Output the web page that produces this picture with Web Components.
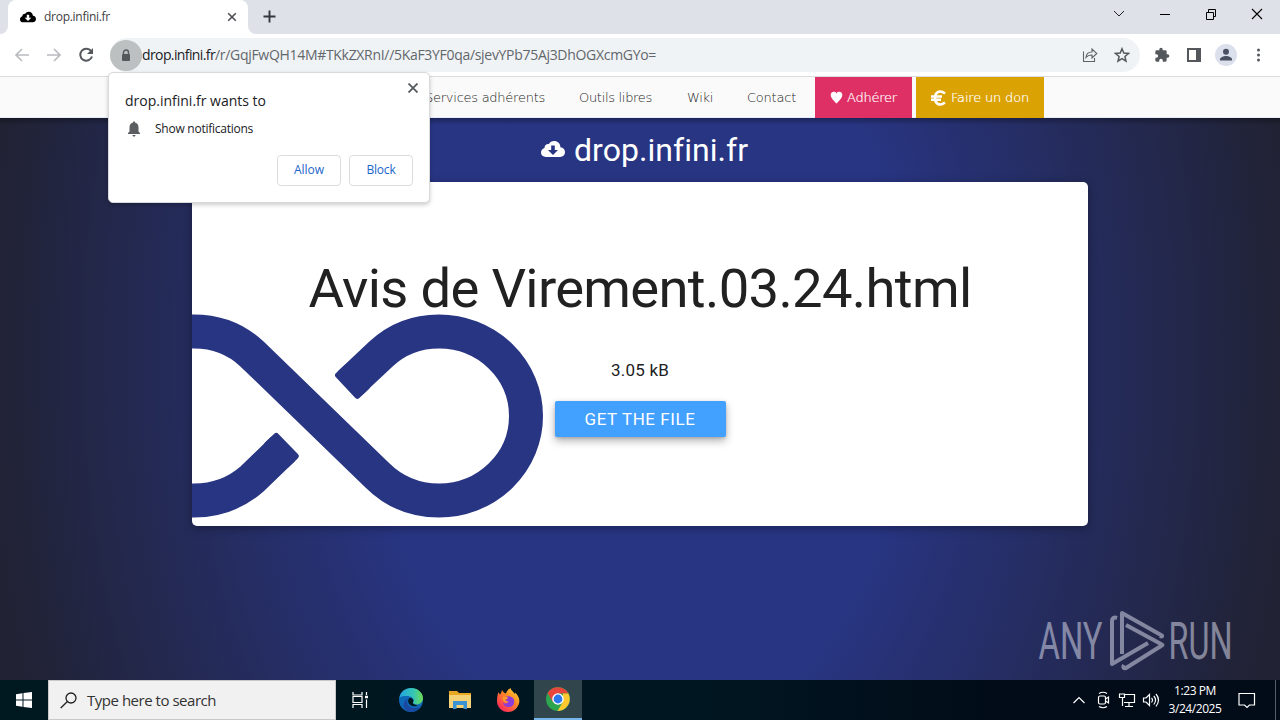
<!DOCTYPE html>
<html lang="en"><head><meta charset="utf-8"><title>drop.infini.fr</title>
<style>
html,body{margin:0;width:1280px;height:720px;overflow:hidden}
body{font-family:"Open Sans","Noto Sans",sans-serif}
</style></head><body>
<desktop-screen></desktop-screen>
<script>
const define=(name,css,html)=>customElements.define(name,class extends HTMLElement{
  constructor(){super();this.attachShadow({mode:'open'}).innerHTML='<style>*{box-sizing:border-box}svg{display:block;flex:none}'+css+'</style>'+html}
});
/* Label that spreads its letters over the width given in the w attribute. */
customElements.define('fit-text',class extends HTMLElement{
  constructor(){super();this.attachShadow({mode:'open'}).innerHTML='<style>:host{display:block;white-space:pre;flex:none}span{display:inline-block}</style><span><slot></slot></span>'}
  connectedCallback(){
    const w=+this.getAttribute('w'),s=this.shadowRoot.querySelector('span');
    this.style.width=w+'px';
    const n=s.getBoundingClientRect().width;
    if(n)s.style.letterSpacing=((w-n)/this.textContent.length)+'px';
  }
});
const cloud='<path fill="currentColor" d="M19.4 7.2C19.4 3.5 16.6 1 13.2 1c-2.400 0-4.300 1.100-5.300 3C5.200 3.600 3.400 5.600 3.500 8 1.300 8.700 0 10.400 0 12.600 0 15.500 2.200 17 5 17h14c3.200 0 5-2.100 5-4.900 0-2.500-1.800-4.600-4.600-4.900zM12 15l-5-5h3.200V5.500h3.600V10H17z"/>';

define('browser-tabs',`:host{display:flex;height:34px;background:#dee1e8;align-items:stretch;color:#45484c}
.left{width:8px;background:#fff}.left i{display:block;height:34px;background:#dee1e8;border-radius:0 0 8px 0}
.tab{width:240px;background:#fff;border-radius:8px 8px 0 0;display:flex;align-items:center;padding:0 11px 0 12px;font-size:12px;color:#3c4043}
.tab fit-text{margin:-2px auto 0 8px}.right{width:32px;background:linear-gradient(90deg,#fff 10px,#dee1e8 10px)}.right i{display:flex;height:34px;background:#dee1e8;border-radius:0 0 0 8px;padding:10px 0 0 15px}
.win{margin-left:auto;display:flex;align-items:center;padding:0 17px 6px 0;gap:34px}.c{color:#000}`,
`<div class="left"><i></i></div><div class="tab"><svg class="c" width="16" height="12" viewBox="0 0 24 18">${cloud}</svg><fit-text w="66">drop.infini.fr</fit-text><svg width="10" height="10" viewBox="0 0 10 10"><path d="M1.200 1.200l7.600 7.600M8.800 1.200L1.200 8.800" stroke="#4b4f54" stroke-width="1.600"/></svg></div>
<div class="right"><i><svg width="13" height="13"><path d="M6.500 .5v12M.5 6.500h12" stroke="#34373d" stroke-width="1.900"/></svg></i></div>
<div class="win"><svg width="12" height="12"><path d="M1 3l5 5 5-5" fill="none" stroke="#222"/></svg><svg width="12" height="12"><path d="M1 6.500h10" stroke="#000"/></svg><svg width="12" height="12"><path d="M1.500 4.500h7v7h-7zM3.500 4.500v-3h7v7h-2" fill="none" stroke="#000"/></svg><svg width="12" height="12"><path d="M1 1l10 10M11 1L1 11" stroke="#000" stroke-width="1.100"/></svg></div>`);

define('browser-toolbar',`:host{display:flex;height:43px;background:#fff;border-bottom:1px solid #dadce0;align-items:center;padding:0 14px;}
.nav{display:flex;gap:16px;width:96px}
.bar{height:34px;width:1030px;border-radius:17px;background:#f0f3f5;display:flex;align-items:center;padding-right:10px;font-size:14px;color:#62676c}
.lock{width:32px;height:31px;border-radius:50%;background:#bdc0c0;display:flex;align-items:center;justify-content:center}
.bar fit-text{margin-top:-1px}.h{color:#202124}.bar .share{margin-left:auto;margin-right:16px}.tools{display:flex;align-items:center;gap:15px;margin-left:14px}`,
`<div class="nav"><svg width="16" height="16" viewBox="0 0 16 16"><path d="M15 8H2M8 2L2 8l6 6" fill="none" stroke="#b9bbbe" stroke-width="1.700"/></svg><svg width="16" height="16" viewBox="0 0 16 16"><path d="M1 8h13M8 2l6 6-6 6" fill="none" stroke="#b9bbbe" stroke-width="1.700"/></svg><svg width="16" height="16" viewBox="0 0 16 16"><path d="M13.200 4.200A6 6 0 1 0 14 9.500" fill="none" stroke="#54585d" stroke-width="2"/><path d="M15 1v6H9z" fill="#54585d"/></svg></div>
<div class="bar"><div class="lock"><svg width="10" height="13" viewBox="0 0 10 13"><path d="M2.500 6V3.500a2.500 2.500 0 0 1 5 0V6" fill="none" stroke="#53585b" stroke-width="1.400"/><rect x="1" y="5" width="8" height="7" rx="1" fill="#53585b"/></svg></div><fit-text class="h" w="73">drop.infini.fr</fit-text><fit-text w="441">/r/GqjFwQH14M#TKkZXRnI//5KaF3YF0qa/sjevYPb75Aj3DhOGXcmGYo=</fit-text>
<svg class="share" width="16" height="16" viewBox="0 0 16 16"><path d="M1.500 4.500v10h11V11M4 10.500c.2-3.500 2.300-5.500 6-5.500V2l4.800 4.500L10 11V8c-3 0-4.700.8-6 2.500z" fill="none" stroke="#5f6368" stroke-width="1.100"/></svg>
<svg width="16" height="16" viewBox="0 0 16 16"><path d="M8 1.800l1.800 4.300 4.700.4-3.600 3 1.100 4.600L8 11.700l-4 2.400 1.100-4.600-3.600-3 4.700-.4z" fill="none" stroke="#54585d" stroke-width="1.500"/></svg></div>
<div class="tools"><svg width="16" height="16" viewBox="0 0 24 24"><path fill="#54585d" d="M20.500 11H19V7c0-1.100-.9-2-2-2h-4V3.500a2.500 2.500 0 0 0-5 0V5H4a2 2 0 0 0-2 2v3.800h1.500a2.700 2.700 0 0 1 0 5.400H2V20c0 1.100.9 2 2 2h3.800v-1.500a2.700 2.700 0 0 1 5.400 0V22H17a2 2 0 0 0 2-2v-4h1.500a2.500 2.500 0 0 0 0-5z"/></svg>
<svg width="18" height="16" viewBox="0 0 18 16"><path d="M3 2h12v12H3z" fill="none" stroke="#54585d" stroke-width="2"/><path d="M11 2h4v12h-4z" fill="#54585d"/></svg>
<svg width="22" height="22" viewBox="0 0 22 22" style="margin-left:-3px"><circle cx="11" cy="11" r="11" fill="#dce0ec"/><circle cx="11" cy="7.800" r="3" fill="#4b5162"/><path d="M5 16.500v-1.300c0-2 3.500-3.300 6-3.300s6 1.300 6 3.300v1.300z" fill="#4b5162"/></svg>
<svg width="5" height="16" viewBox="0 0 5 16" fill="#54585d" style="margin-left:4px"><circle cx="2.500" cy="3" r="1.500"/><circle cx="2.500" cy="8" r="1.500"/><circle cx="2.500" cy="13" r="1.500"/></svg></div>`);

define('site-nav',`:host{display:flex;height:41px;background:#fafafa;border-bottom:1px solid #e8edf5;padding-left:425px;font:13px/42px "DejaVu Sans",sans-serif;font-weight:200;color:#222}
.b{display:flex;align-items:center;color:#fff;height:41px;margin-left:19px;width:97px;padding-left:15px;background:#df3065}.g{background:#dba204;width:128px;margin-left:4px}
.b fit-text{margin-left:4px;-webkit-text-stroke:.2px #fff}`,
`<fit-text w="120">Services adhérents</fit-text><fit-text w="73" style="margin-left:34px">Outils libres</fit-text><fit-text w="26" style="margin-left:35px">Wiki</fit-text><fit-text w="49" style="margin-left:34px">Contact</fit-text>
<div class="b"><svg width="13" height="13" viewBox="0 0 13 13"><path fill="#fff" d="M6.500 12.500C4.500 10.500 1 7.500.7 4.300.4 1 4.600-.5 6.500 2.400 8.400-.5 12.600 1 12.300 4.300 12 7.500 8.500 10.500 6.500 12.500z"/></svg><fit-text w="50">Adhérer</fit-text></div>
<div class="b g"><svg width="16" height="16" viewBox="0 0 16 16"><path d="M14 3.500C8-1 4 3 4 8s4 9 10 4.500M0 6.500h11M0 9.700h10" fill="none" stroke="#fff" stroke-width="2.600"/></svg><fit-text w="78">Faire un don</fit-text></div>`);

define('infinity-mark',`:host{display:block}`,
`<svg width="360" height="212" viewBox="192 314 360 212"><g fill="none" stroke="#283583" stroke-width="34"><path d="M190 331.500H194C216 331.500 236 339 252 354L377 475C394 492 416 500.500 439 500.500A87 84.500 0 0 0 439 331.500C416 331.500 396 340 381 354L350 383.200"/><path d="M190 500.500H194C216 500.500 236 493 252 479L283 449"/></g><g fill="#283583" stroke="#283583" stroke-width="6" stroke-linejoin="round"><path d="M338.100 375.300L357.300 395.700 366.600 387 347.400 366.600z"/><path d="M276.300 436L295.700 456.200 286.400 465 267 444.800z"/></g></svg>`);

define('drop-page',`:host{display:flex;flex-direction:column;height:562px;align-items:center;background:linear-gradient(#0000004d,#0000 7px),radial-gradient(ellipse 680px 1000px at 50% 42%,#283583 38%,#212234 96%);font-family:Roboto,sans-serif;overflow:hidden}
header{height:64px;display:flex;align-items:center;color:#fff;font-size:32px;gap:9px;width:206px;margin-left:8px}
main{width:896px;height:344px;background:#fff;border-radius:5px;box-shadow:0 2px 10px #00000059;display:grid;grid-template:344px/896px;overflow:hidden;color:#212121}
main>*{grid-area:1/1}infinity-mark{align-self:end}
.c{display:flex;flex-direction:column;align-items:center;z-index:1;padding-top:75px}
.c fit-text{display:block}.t{font-size:54.400px;line-height:64px}.s{font-size:17px;line-height:20px;margin-top:39px}
button{margin-top:21px;width:171px;height:36px;border:0;border-radius:2px;background:#42a0ff;color:#fff;font:17px/36px Roboto,sans-serif;padding:0 0 0 30px;text-align:left;box-shadow:0 4px 8px #0000004d,0 1px 3px #00000026}`,
`<header><svg width="24" height="18" viewBox="0 0 24 18" style="margin-bottom:3px">${cloud}</svg><fit-text w="173">drop.infini.fr</fit-text></header>
<main><infinity-mark></infinity-mark><div class="c"><fit-text class="t" w="663">Avis de Virement.03.24.html</fit-text><fit-text class="s" w="58">3.05 kB</fit-text><button><fit-text w="111">GET THE FILE</fit-text></button></div></main>`);

define('permission-popup',`:host{display:block;position:absolute;left:108px;top:72px;width:322px;height:131px;background:#fff;border:1px solid #d8d9db;border-radius:5px;box-shadow:0 2px 4px #0003;padding:10px 16px;box-sizing:border-box;color:#202124}
.top{display:flex;justify-content:space-between;font-size:14px;line-height:20px}.top fit-text{margin-top:8px}.row{display:flex;align-items:center;font-size:12px;line-height:16px;margin-top:10px;gap:13px;padding-left:1px}
.btn{display:flex;justify-content:flex-end;gap:8px;margin-top:18px}.btn div{width:64px;height:31px;border:1px solid #dadce0;border-radius:4px;color:#1b66ca;display:flex;justify-content:center;font:500 12px/28px "Open Sans",sans-serif}`,
`<div class="top"><fit-text w="141">drop.infini.fr wants to</fit-text><svg width="10" height="10" style="margin:0 -5px 0 0"><path d="M.5 .5l9 9M9.500 .5l-9 9" stroke="#55585c" stroke-width="1.800"/></svg></div>
<div class="row"><svg width="16" height="16" viewBox="0 0 16 16"><path fill="#5c5f62" d="M8 .5c-.8 0-1.200.5-1.200 1.300C4.500 2.300 3.500 4 3.500 6.500v4L2 12v1h12v-1l-1.500-1.500v-4c0-2.500-1-4.200-3.300-4.700C9.200 1 8.800.5 8 .5zM6.500 14h3c0 1-.6 1.600-1.500 1.600S6.500 15 6.500 14z"/></svg><fit-text w="98">Show notifications</fit-text></div>
<div class="btn"><div><fit-text w="30">Allow</fit-text></div><div><fit-text w="29">Block</fit-text></div></div>`);

define('any-run-mark',`:host{display:block;position:absolute;left:1030px;top:600px;opacity:.53}`,
`<svg width="220" height="78" viewBox="1030 600 220 78"><g fill="#d9dbea" font-family="Roboto,sans-serif" font-size="51"><text x="1038.500" y="659" textLength="64" lengthAdjust="spacingAndGlyphs">ANY</text><text x="1168.500" y="659" textLength="64" lengthAdjust="spacingAndGlyphs">RUN</text></g>
<g fill="none" stroke="#d9dbea" stroke-width="4" stroke-linejoin="round"><path d="M1117 618c-3-1-5 0-5 3v43l36-21M1122 654V613L1161 635c2 1 1 2-1 1M1126 625l35 19c2 1 2 1 0 2l-35 22c-3 1-3-1-2-3"/></g></svg>`);

define('task-bar',`:host{display:flex;height:40px;background:linear-gradient(90deg,#001820,#001621 55%,#020b18 80%);align-items:center;color:#fff}
.start{width:48px;display:flex;justify-content:center}.search{width:288px;height:40px;background:#f1f1f1;border:1px solid #c8c8c8;display:flex;align-items:center;padding-left:11px;gap:10px;font-size:15px;color:#333}
.app{width:49.500px;height:40px;display:flex;align-items:center;justify-content:center}.on{width:48px;background:#31454d;border-bottom:2px solid #77b6eb}
.tray{margin-left:auto;display:flex;align-items:center;width:208px}.time{font-size:12px;line-height:18px;display:flex;flex-direction:column;align-items:center;width:54px;margin:0 16px 0 8px}`,
`<div class="start"><svg width="16" height="16" viewBox="0 0 16 16" fill="#fff"><path d="M0 2.200l6.500-.9v6.200H0zM7.500 1.100L16 0v7.500H7.500zM0 8.500h6.500v6.200L0 13.800zM7.500 8.500H16V16l-8.500-1.100z"/></svg></div>
<div class="search"><svg width="17" height="17" viewBox="0 0 17 17" fill="none" stroke="#222" stroke-width="1.300"><circle cx="11" cy="6" r="5"/><path d="M7.400 9.500L.7 16"/></svg><fit-text w="129">Type here to search</fit-text></div>
<div class="app" style="width:48px"><svg width="18" height="18" viewBox="0 0 18 18" fill="none" stroke="#fff" stroke-width="1.200"><path d="M2 1v3h9V1M2 5.500h9v6H2zM2 17v-3.500h9V17M15.500 1v3M15.500 8.500V17"/><path d="M14 6h3" stroke-width="2.500"/></svg></div>
<div class="app" style="width:54px"><svg width="24" height="24" viewBox="0 0 24 24"><defs><linearGradient id="a"><stop stop-color="#23a3e2"/><stop offset=".6" stop-color="#35c7b4"/><stop offset="1" stop-color="#6fdc52"/></linearGradient></defs><circle cx="12" cy="12" r="12" fill="#0f68b8"/><path d="M.3 10C1.500 3.500 6.500 0 12 0c7 0 12 5 12 10 0 4-3 6.500-6.500 6.500-3 0-4-1-3.500-2.200 1.500-2 .5-4.800-3-5.800C6.500 7.500 2 8 .3 10z" fill="url(#a)"/><path d="M9.500 10c-1 1-2 3-1.200 5.500 1.500 4.500 7.500 6 12.500 3-4 7.500-14.500 6.500-16 .5-.8-4 1.200-7.500 4.700-9z" fill="#1b48a0"/><path d="M10.300 10c3-.5 5 2 3.700 4.300-.6 1.500 1.500 3 5 2.600-3 2.300-8 1.300-9.500-1.900-.8-2-.2-4 .8-5z" fill="#001820"/></svg></div>
<div class="app" style="width:44px"><svg width="22" height="20" viewBox="0 0 22 20"><path d="M0 1h8l2 2h12v15H0z" fill="#e9a824"/><path d="M0 5h22v13H0z" fill="#f6d276"/><path d="M4 11h14v8h-3.500v-4h-7v4H4z" fill="#3b93d3"/></svg></div>
<div class="app" style="width:52px"><svg width="24" height="24" viewBox="0 0 24 24"><defs><linearGradient id="f" x1="1" y1="0" x2=".2" y2="1"><stop stop-color="#ffe436"/><stop offset=".45" stop-color="#ff8b26"/><stop offset="1" stop-color="#ff2060"/></linearGradient></defs><path d="M2.500 4c.5 1.500 1 2 1.500 2.500C5 5 5.500 4.500 6 2c1 2 2 3 4 3.500 1-3 3-4.500 4.500-5.500.5 2.500 3 3.500 4 6l.5-1.500C23 8 24 12 23 15.500 21.500 20.500 17 24 12 24 5.500 24 1 19 1 13c0-3.500.5-6.500 1.500-9z" fill="url(#f)"/><path d="M9 9c3-1.500 8-1 9 3 1 5-2.500 7.500-6.500 7-3-.5-4.500-2.500-4.500-5 1.500 2 4 1.800 5 .5-2 0-2.500-1-3.500-2 1-.5 2-.5 2.500-1.500z" fill="#8e3bdc"/><path d="M6.500 9c2-1 4-.7 5.500.5-.5 1.500-2 1.500-3 2 0 1 2 2 3.500 2-1.500 2.500-6.500 1-6-4.500z" fill="#ff9a2a"/></svg></div>
<div class="app on"><svg width="24" height="24" viewBox="0 0 24 24"><circle cx="12" cy="12" r="12" fill="#2da44e"/><path d="M1.600 6A12 12 0 0 1 22.400 6.500H12L6.800 15z" fill="#e8453c"/><path d="M22.400 6.500A12 12 0 0 1 11.500 24L17 14.800 16.800 6.500z" fill="#fdc92e"/><circle cx="12" cy="12" r="5.800" fill="#fff"/><circle cx="12" cy="12" r="4.400" fill="#2b77ed"/></svg></div>
<div class="tray"><svg width="88" height="20" viewBox="1072 690 88 20" fill="none" stroke="#fff" stroke-width="1.200"><path d="M1073.500 703l5.500-5.500 5.500 5.500"/><rect x="1098.500" y="696" width="7" height="8" rx="1.500"/><path d="M1105.500 699l3-2v6l-3-2M1099 693.500q4-2.500 8 0M1099 706.500q4 2.500 8 0"/><path d="M1124 694.500h10.500v8H1124M1129 703v3.500M1125 706.500h8M1122.500 698v8M1119.500 694h5v3.500h-5z"/><path d="M1143.500 698h2.500l3.500-3.500v11L1146 702h-2.500zM1151.500 698q2 2 0 4.500M1153.800 696q3.500 4 0 8.500M1156 694q5 6 0 12.500"/></svg>
<div class="time"><fit-text w="42">1:23 PM</fit-text><fit-text w="53">3/24/2025</fit-text></div><svg width="18" height="18" viewBox="0 0 18 18" fill="none" stroke="#fff" stroke-width="1.200"><path d="M1 2.500h15.500v11.500H11.500L9 16.500 6.500 14H1z"/></svg><svg width="2" height="40" style="margin-left:19px"><path d="M.5 0v40" stroke="#53606c"/></svg></div>`);

define('desktop-screen',`:host{display:block;position:relative;width:1280px;height:720px;overflow:hidden}`,
`<browser-tabs></browser-tabs><browser-toolbar></browser-toolbar><site-nav></site-nav><drop-page></drop-page><task-bar></task-bar><permission-popup></permission-popup><any-run-mark></any-run-mark>`);
</script></body></html>
